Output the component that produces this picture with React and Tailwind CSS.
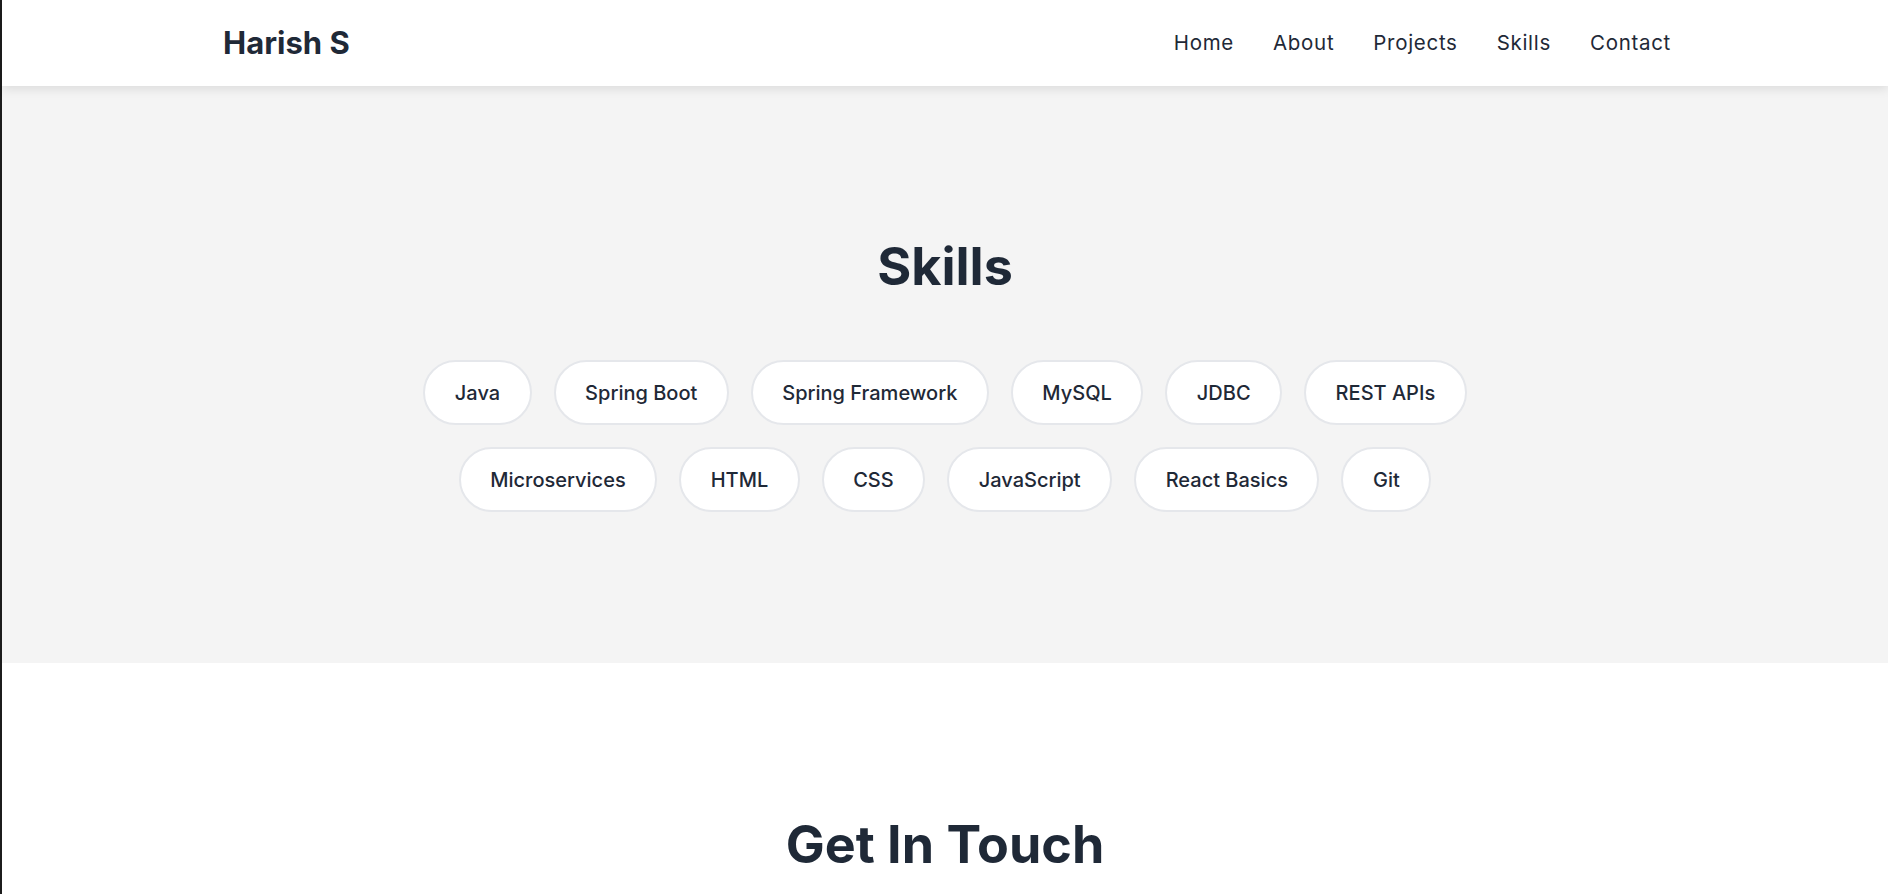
import React from 'react';

const row1 = ['Java', 'Spring Boot', 'Spring Framework', 'MySQL', 'JDBC', 'REST APIs'];
const row2 = ['Microservices', 'HTML', 'CSS', 'JavaScript', 'React Basics', 'Git'];
const links = ['Home', 'About', 'Projects', 'Skills', 'Contact'];

function Pill({ label }) {
  return (
    <span className="h-[65px] px-[29.5px] flex items-center rounded-full border-2 border-[#e5e7eb] bg-white text-[20px] font-medium text-[#1f2937]">
      {label}
    </span>
  );
}

export default function App() {
  return (
    <div className="min-h-screen flex bg-white" style={{ fontFamily: 'Inter, "Noto Sans", sans-serif' }}>
      {/* window edge */}
      <div className="w-[2px] shrink-0 bg-[#1c1c1c]" />

      <div className="flex-1 min-w-0">
        {/* Navbar */}
        <header className="relative z-10 h-[86px] bg-white shadow-[0_3px_10px_rgba(0,0,0,0.1)]">
          <div className="h-full px-[221px] flex items-center justify-between">
            <span className="text-[31px] font-bold text-[#1f2937]">Harish S</span>
            <nav className="flex items-center gap-[39px] mr-[-4px]">
              {links.map((l) => (
                <a key={l} className="text-[20.5px] tracking-[0.7px] text-[#1f2937]">{l}</a>
              ))}
            </nav>
          </div>
        </header>

        {/* Skills */}
        <section className="bg-[#f4f4f4] pt-[155px] pb-[151px]">
          <h2 className="text-[52px] leading-none font-bold text-center text-[#1f2937] mb-[67px]">Skills</h2>
          <div className="flex flex-col items-center gap-[22px]">
            <div className="flex gap-[22px]">
              {row1.map((s) => <Pill key={s} label={s} />)}
            </div>
            <div className="flex gap-[22px]">
              {row2.map((s) => <Pill key={s} label={s} />)}
            </div>
          </div>
        </section>

        {/* Contact */}
        <section className="bg-white pt-[156px] pb-[80px]">
          <h2 className="text-[52px] leading-none font-bold text-center text-[#1f2937]">Get In Touch</h2>
        </section>
      </div>
    </div>
  );
}
